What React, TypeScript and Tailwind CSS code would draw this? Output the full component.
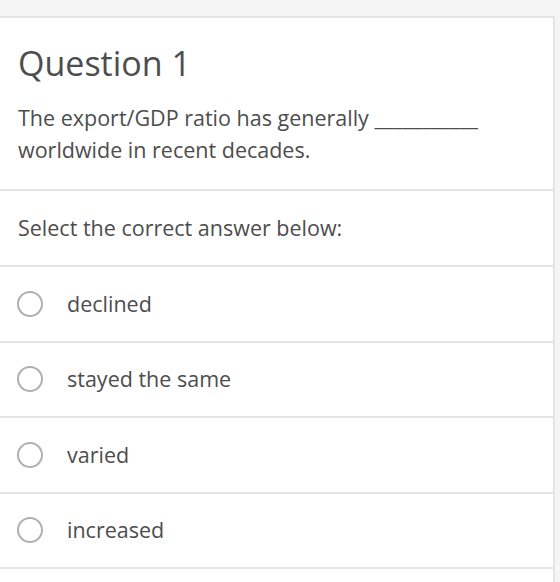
const options = ["declined", "stayed the same", "varied", "increased"];

export default function App() {
  return (
    <div
      className="h-[582px] overflow-hidden bg-[#f5f5f5] pt-4 pr-[5px]"
      style={{ fontFamily: '"Open Sans", sans-serif' }}
    >
      <div className="-ml-[2px] border-2 border-[#e4e4e4] bg-white text-[#4d4d4d]">
        <div className="px-[18px] pt-[22px] pb-[23px]">
          <h1 className="text-[34px] leading-[46px] font-normal">Question 1</h1>
          <p className="mt-[16px] text-[21.5px] leading-[32px]">
            The export/GDP ratio has generally ___________ worldwide in recent decades.
          </p>
        </div>
        <div className="flex h-[76px] items-center border-t-2 border-[#e4e4e4] px-[18px] text-[21.5px]">
          Select the correct answer below:
        </div>
        {options.map((o) => (
          <div
            key={o}
            className="flex h-[75.5px] items-center border-t-2 border-[#e4e4e4] pl-[17px] text-[21.5px]"
          >
            <span className="h-[26px] w-[26px] shrink-0 rounded-full border-2 border-[#b0b0b0]" />
            <span className="ml-[24px]">{o}</span>
          </div>
        ))}
        <div className="h-[76px] border-t-2 border-[#e4e4e4]" />
      </div>
    </div>
  );
}
